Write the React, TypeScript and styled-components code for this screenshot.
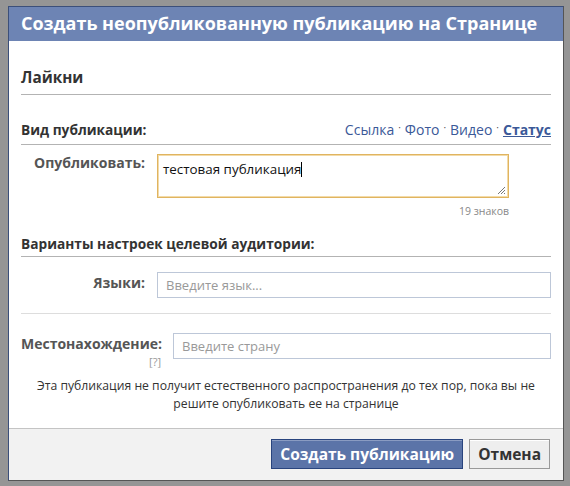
import React from "react";
import styled, { createGlobalStyle } from "styled-components";

const GlobalStyle = createGlobalStyle`
  html, body {
    margin: 0;
    padding: 0;
    background: #959595;
  }
  body {
    font-family: "Open Sans", "Noto Sans", "DejaVu Sans", sans-serif;
    font-size: 12px;
    color: #333;
  }
`;

const Page = styled.div`
  width: 570px;
  height: 486px;
  box-sizing: border-box;
  padding: 6px 6px 0 8px;
`;

const Dialog = styled.div`
  width: 556px;
  height: 475px;
  box-sizing: border-box;
  border: 1px solid #3b4f7a;
  border-right-color: #555;
  border-bottom-color: #555;
  background: #fff;
  display: flex;
  flex-direction: column;
`;

const Header = styled.div`
  background: #6d84b4;
  color: #fff;
  font-weight: 700;
  font-size: 18px;
  height: 34px;
  line-height: 33px;
  padding-left: 12px;
  white-space: nowrap;
`;

const Body = styled.div`
  flex: 1;
  padding: 0 12px;
`;

const PageTitle = styled.div`
  font-weight: 700;
  font-size: 15.3px;
  line-height: 20px;
  color: #333;
  padding: 26px 0 7px;
  border-bottom: 1px solid #b3b3b3;
`;

const SectionRow = styled.div<{ $top: number; $bottom: number }>`
  display: flex;
  justify-content: space-between;
  align-items: baseline;
  margin-top: ${(p) => p.$top}px;
  padding-bottom: ${(p) => p.$bottom}px;
  border-bottom: 1px solid #b3b3b3;
`;

const SectionTitle = styled.div`
  font-weight: 700;
  font-size: 13.7px;
  line-height: 19px;
  color: #333;
`;

const Links = styled.div`
  font-size: 14px;
  color: #3b5998;
`;

const Dot = styled.span`
  color: #555;
  font-size: 10px;
  margin: 0 4px;
  position: relative;
  top: -4px;
`;

const Current = styled.span`
  font-weight: 700;
  text-decoration: underline;
`;

const FieldRow = styled.div<{ $label: number; $top: number }>`
  display: grid;
  grid-template-columns: ${(p) => p.$label}px 1fr;
  column-gap: 12px;
  align-items: start;
  margin-top: ${(p) => p.$top}px;
`;

const Label = styled.div<{ $pad: number }>`
  text-align: right;
  font-weight: 700;
  font-size: 14px;
  line-height: 18px;
  color: #555;
  padding-top: ${(p) => p.$pad}px;
  white-space: nowrap;
`;

const Help = styled.div`
  font-size: 11px;
  line-height: 12px;
  font-weight: 400;
  color: #999;
  margin-top: 3px;
`;

const TextArea = styled.div`
  width: 352px;
  height: 44px;
  box-sizing: border-box;
  border: 1px solid #e0b460;
  box-shadow: inset 0 0 0 1px #f3dba8;
  padding: 5px 5px;
  font-size: 13.4px;
  line-height: 18px;
  color: #111;
  position: relative;
`;

const Caret = styled.span`
  display: inline-block;
  width: 1px;
  height: 15px;
  background: #000;
  vertical-align: -3px;
`;

const Grip = styled.svg`
  position: absolute;
  right: 2px;
  bottom: 2px;
`;

const Counter = styled.div`
  width: 352px;
  text-align: right;
  font-size: 10.5px;
  line-height: 15px;
  color: #888;
  margin-top: 6px;
`;

const Input = styled.div`
  height: 26px;
  box-sizing: border-box;
  border: 1px solid #bdc7d8;
  padding: 0 8px;
  line-height: 24px;
  font-size: 13px;
  color: #999;
`;

const Separator = styled.div`
  border-top: 1px solid #dddddd;
  margin-top: 15px;
`;

const Notice = styled.div`
  text-align: center;
  font-size: 12.2px;
  color: #333;
  line-height: 18px;
  margin-top: 9px;
`;

const Footer = styled.div`
  height: 52px;
  box-sizing: border-box;
  border-top: 1px solid #c4c4c4;
  background: #f2f2f2;
  display: flex;
  justify-content: flex-end;
  align-items: flex-start;
  gap: 6px;
  padding: 10px 13px 0 0;
`;

const Button = styled.button<{ $primary?: boolean }>`
  height: 30px;
  box-sizing: border-box;
  font-family: inherit;
  font-weight: 700;
  font-size: 15.5px;
  padding: 0 8px;
  border: 1px solid ${(p) => (p.$primary ? "#29447e" : "#999")};
  background: ${(p) => (p.$primary ? "#5b74a8" : "#eeeeee")};
  color: ${(p) => (p.$primary ? "#fff" : "#333")};
  box-shadow: inset 0 1px 0 ${(p) => (p.$primary ? "#8a9cc2" : "#fff")};
`;

const App = () => {
  return (
    <Page>
      <GlobalStyle />
      <Dialog>
        <Header>Создать неопубликованную публикацию на Странице</Header>
        <Body>
          <PageTitle>Лайкни</PageTitle>
          <SectionRow $top={25} $bottom={5}>
            <SectionTitle>Вид публикации:</SectionTitle>
            <Links>
              Ссылка<Dot>·</Dot>Фото<Dot>·</Dot>Видео<Dot>·</Dot>
              <Current>Статус</Current>
            </Links>
          </SectionRow>
          <FieldRow $label={124} $top={9}>
            <Label $pad={0}>Опубликовать:</Label>
            <div>
              <TextArea>
                тестовая публикация
                <Caret />
                <Grip width="9" height="9" viewBox="0 0 9 9">
                  <path d="M8 1 L1 8 M8 4 L4 8 M8 7 L7 8" stroke="#777" strokeWidth="1" />
                </Grip>
              </TextArea>
              <Counter>19 знаков</Counter>
            </div>
          </FieldRow>
          <SectionRow $top={15} $bottom={3}>
            <SectionTitle>Варианты настроек целевой аудитории:</SectionTitle>
          </SectionRow>
          <FieldRow $label={124} $top={15}>
            <Label $pad={2}>Языки:</Label>
            <Input>Введите язык...</Input>
          </FieldRow>
          <Separator />
          <FieldRow $label={140} $top={19}>
            <Label $pad={2}>
              Местонахождение:
              <Help>[?]</Help>
            </Label>
            <Input>Введите страну</Input>
          </FieldRow>
          <Notice>
            Эта публикация не получит естественного распространения до тех пор, пока вы не
            <br />
            решите опубликовать ее на странице
          </Notice>
        </Body>
        <Footer>
          <Button $primary>Создать публикацию</Button>
          <Button>Отмена</Button>
        </Footer>
      </Dialog>
    </Page>
  );
};

export default App;
